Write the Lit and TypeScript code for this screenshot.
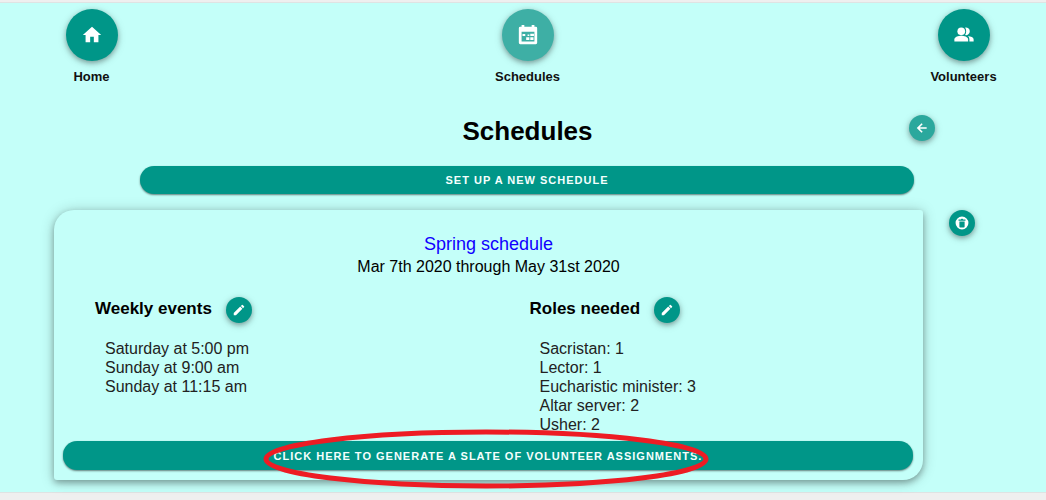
import { LitElement, html, css, svg } from "lit";
import { customElement } from "lit/decorators.js";

const icons = {
  home: svg`<path d="M10 20v-6h4v6h5v-8h3L12 3 2 12h3v8z"/>`,
  calendar: svg`<path fill-rule="evenodd" d="M5 1h3v2h8V1h3v2h1.500a1.500 1.500 0 0 1 1.500 1.500v16a1.500 1.500 0 0 1-1.500 1.500h-17A1.500 1.500 0 0 1 2 20.500v-16A1.500 1.500 0 0 1 3.500 3H5zM5 8.500V19h14V8.500z"/><path d="M6 11h3v2H6zM11.500 11.500h2v1.500h-2zM14.500 10.500h4v2.500h-4zM10 14.500h3.500v3H10zM14.500 14.500H18v3h-3.500z"/>`,
  people: svg`<circle cx="9" cy="8" r="4.200"/><path d="M1.500 19v-2.200C1.500 14 6 12.800 9 12.800s7.500 1.200 7.500 4V19z"/><path d="M13.200 3.900a4.200 4.200 0 1 1 0 8.200c1.600-2.400 1.600-5.800 0-8.200zM16.400 13c3 .4 6.100 1.500 6.100 3.800V19h-4.600v-2.200c0-1.600-.6-2.800-1.500-3.800z"/>`,
  back: svg`<path d="M20 10.700H8.200l5-5L11.300 3.800 3 12l8.300 8.200 1.900-1.900-5-5H20z"/>`,
  pencil: svg`<path d="M3 17.200V21h3.800L17.800 9.900l-3.700-3.700zM20.700 7a1 1 0 0 0 0-1.400l-2.300-2.300a1 1 0 0 0-1.400 0l-1.800 1.800 3.700 3.700z"/>`,
  trash: svg`<path fill-rule="evenodd" d="M12 1a11 11 0 1 0 0 22 11 11 0 0 0 0-22zM6 6h4l1-1.500h2L14 6h4v2H6zM7.500 9.500h9V18a1.500 1.500 0 0 1-1.500 1.500H9A1.500 1.500 0 0 1 7.500 18z"/>`,
};

const icon = (name: keyof typeof icons) =>
  html`<svg class="icon" viewBox="0 0 24 24" aria-hidden="true">${icons[name]}</svg>`;

@customElement("app-root")
export class AppRoot extends LitElement {
  static styles = css`
    :host {
      display: block;
      min-height: 100vh;
      box-sizing: border-box;
      padding: 2px 0 7px;
      background: #efefef;
      color: #000;
      font: 16px/19px "Liberation Sans", Arial, sans-serif;
    }
    main {
      background: #c4fff9;
      border: solid #dfe3e3;
      border-width: 1px 0;
      padding: 6px 0 12px;
    }
    nav {
      display: flex;
      justify-content: space-between;
      padding: 0 50px 0 59px;
    }
    .tab {
      width: 65px;
      display: flex;
      flex-direction: column;
      align-items: center;
      gap: 8px;
      color: #111;
      font-size: 13px;
      line-height: 15px;
      font-weight: bold;
      text-decoration: none;
    }
    .round {
      display: inline-flex;
      align-items: center;
      justify-content: center;
      flex: none;
      box-sizing: border-box;
      width: 26px;
      height: 26px;
      padding: 0;
      border: 0;
      border-radius: 50%;
      background: #009688;
      color: #fff;
      box-shadow: 0 2px 5px rgba(0, 0, 0, 0.3), 0 2px 10px rgba(0, 0, 0, 0.14);
    }
    .large {
      width: 52px;
      height: 52px;
    }
    .large .icon {
      width: 22px;
      height: 22px;
    }
    .active {
      background: #3eafa5;
    }
    .soft {
      background: #2ba89d;
    }
    .icon {
      width: 14px;
      height: 14px;
      fill: currentColor;
    }
    .title {
      display: grid;
      grid-template-columns: 1fr auto 1fr;
      align-items: center;
      padding: 0 111px 0 120px;
      margin-top: 31px;
    }
    h1 {
      grid-column: 2;
      margin: 0;
      font-size: 26px;
      line-height: 32px;
    }
    .title .round {
      justify-self: end;
      margin-bottom: 6px;
    }
    .bar {
      position: relative;
      display: block;
      box-sizing: border-box;
      height: 28px;
      padding: 0;
      border: 0;
      border-radius: 14px;
      background: #009688;
      color: #f4fffd;
      box-shadow: 0 1px 2px rgba(0, 0, 0, 0.5);
      font: bold 11px/28px "Liberation Sans", Arial, sans-serif;
      letter-spacing: 1px;
      text-transform: uppercase;
    }
    .setup {
      width: calc(100% - 272px);
      margin: 19px 132px 16px 140px;
    }
    .entry {
      display: flex;
      align-items: flex-start;
      gap: 26px;
      padding: 0 71px 0 54px;
    }
    .card {
      flex: 1;
      padding: 23px 0 10px;
      border-radius: 20px 3px;
      background: #c4fff9;
      box-shadow: 0 3px 6px rgba(0, 0, 0, 0.28), 0 1px 14px rgba(0, 0, 0, 0.22);
    }
    .head {
      text-align: center;
    }
    .head a {
      display: block;
      color: #1100ff;
      font-size: 18px;
      line-height: 22px;
      text-decoration: none;
    }
    .head p {
      margin: 0;
      line-height: 23px;
    }
    .columns {
      display: grid;
      grid-template-columns: 1fr 1fr;
      margin: 19px 0 7px;
    }
    .column {
      padding-left: 41px;
    }
    .sub {
      display: flex;
      align-items: center;
      gap: 14px;
    }
    h2 {
      margin: 0 0 2px;
      font-size: 17px;
      line-height: 22px;
    }
    ul {
      list-style: none;
      margin: 16px 0 0;
      padding: 0 0 0 10px;
      color: #222;
    }
    .generate {
      width: calc(100% - 19px);
      height: 29px;
      margin: 0 10px 0 9px;
    }
    .ring {
      position: absolute;
      left: 50%;
      top: 50%;
      transform: translate(-50%, -50%);
      width: 446px;
      height: 60px;
      margin: 3px 0 0 -2px;
      fill: none;
      stroke: #ed1c24;
      stroke-width: 5px;
      pointer-events: none;
    }
  `;

  private tab(name: keyof typeof icons, label: string, active = false) {
    return html`<a class="tab" href="#${label.toLowerCase()}">
      <span class="round large ${active ? "active" : ""}">${icon(name)}</span>${label}
    </a>`;
  }

  private column(title: string, items: string[]) {
    return html`<section class="column">
      <div class="sub">
        <h2>${title}</h2>
        <button class="round" aria-label="Edit ${title}">${icon("pencil")}</button>
      </div>
      <ul>${items.map((item) => html`<li>${item}</li>`)}</ul>
    </section>`;
  }

  render() {
    return html`<main>
      <nav>
        ${this.tab("home", "Home")}
        ${this.tab("calendar", "Schedules", true)}
        ${this.tab("people", "Volunteers")}
      </nav>
      <header class="title">
        <h1>Schedules</h1>
        <button class="round soft" aria-label="Back">${icon("back")}</button>
      </header>
      <button class="bar setup">Set up a new schedule</button>
      <div class="entry">
        <article class="card">
          <div class="head">
            <a href="#spring">Spring schedule</a>
            <p>Mar 7th 2020 through May 31st 2020</p>
          </div>
          <div class="columns">
            ${this.column("Weekly events", ["Saturday at 5:00 pm", "Sunday at 9:00 am", "Sunday at 11:15 am"])}
            ${this.column("Roles needed", ["Sacristan: 1", "Lector: 1", "Eucharistic minister: 3", "Altar server: 2", "Usher: 2"])}
          </div>
          <button class="bar generate">
            Click here to generate a slate of volunteer assignments.
            <svg class="ring" viewBox="0 0 446 60" aria-hidden="true">
              <ellipse cx="223" cy="30" rx="220" ry="27"/>
            </svg>
          </button>
        </article>
        <button class="round" aria-label="Delete schedule">${icon("trash")}</button>
      </div>
    </main>`;
  }
}
